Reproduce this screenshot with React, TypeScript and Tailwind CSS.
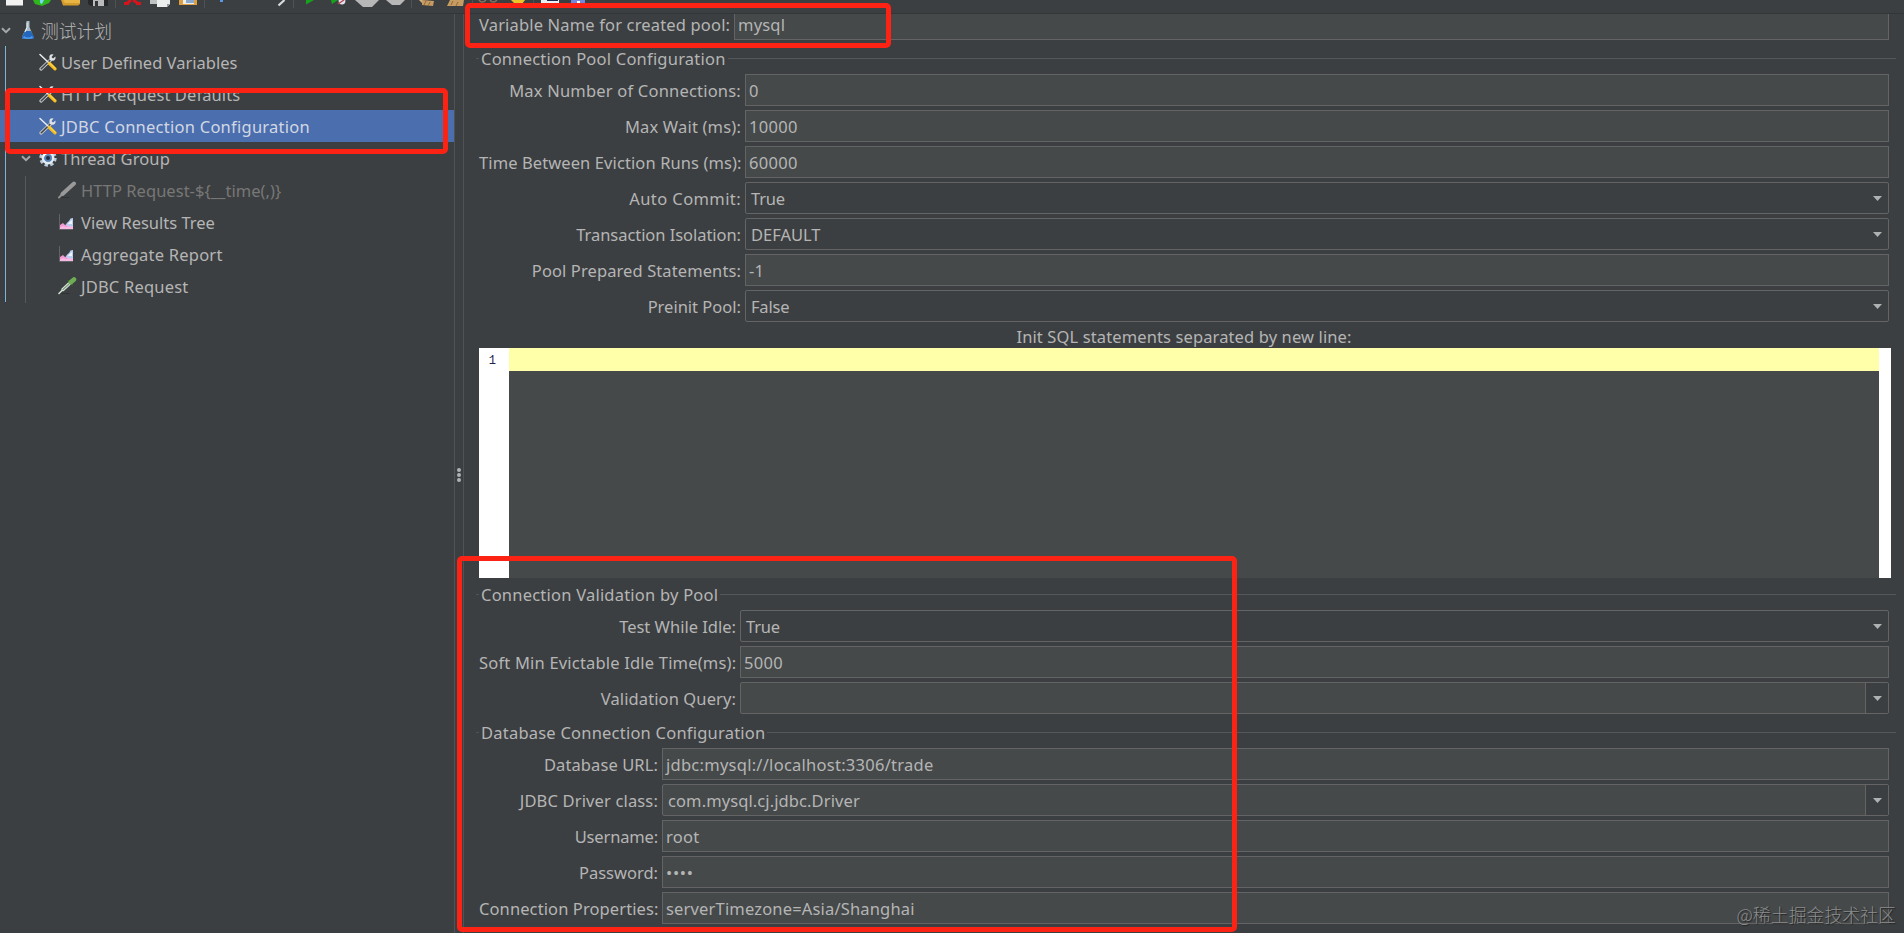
import React from 'react';

interface FieldProps {
  label: string;
  value: string;
  kind?: 'text' | 'select' | 'editable';
  labelClass?: string;
  valueClass?: string;
}

interface TreeRowProps {
  label: string;
  icon: React.ReactNode;
  depth: 0 | 1 | 2;
  open?: boolean;
  selected?: boolean;
  disabled?: boolean;
  labelClass?: string;
}

const FlaskIcon = () => (
  <svg width="14" height="20" viewBox="0 0 14 20">
    <path d="M5.500 1h3v6l4 10q.5 2-1.500 2H2.500Q.5 19 1 17L5.500 7z" fill="#a9bccb" />
    <path d="M4 11h6l3 6q.3 2-1.500 2H2.500Q.7 19 1 17z" fill="#2467bd" />
    <path d="M3 16q4 3 8 0l1 2q-5 2-10 0z" fill="#4e9df0" />
    <path d="M6 2.500v5L4 12" stroke="#f2f6f8" strokeWidth="1" fill="none" />
  </svg>
);

const ToolsIcon = () => (
  <svg width="18" height="18" viewBox="0 0 18 18" fill="none">
    <path d="M2 16 11.500 7" stroke="#c4c7c9" strokeWidth="3.200" strokeLinecap="round" />
    <path d="M2.300 15.700 11 7.200" stroke="#44474a" strokeWidth="1.600" strokeLinecap="round" />
    <path d="M16.500 3.500 14 5.500 12.500 4 14.500 1.500Q10.500.6 10.300 4.300L11 7l2.500.8q3.500-.4 3-4.300z" fill="#dfe3e6" />
    <path d="M1 1.500 9.500 9.500" stroke="#e9edf0" strokeWidth="1.500" strokeLinecap="round" />
    <path d="M10.500 10.500 16 15.800" stroke="#f3bd22" strokeWidth="3.200" strokeLinecap="round" />
    <path d="M10.500 10 16.500 15.500" stroke="#ffdc57" strokeWidth="1" />
  </svg>
);

const GearIcon = () => (
  <svg width="18" height="18" viewBox="0 0 18 18">
    <circle cx="9" cy="9" r="7.200" fill="none" stroke="#bccbdc" strokeWidth="3" strokeDasharray="3.300 2.350" />
    <circle cx="9" cy="9" r="5.200" fill="#5482b4" stroke="#e3ebf3" strokeWidth="2.400" />
    <circle cx="9" cy="9" r="2" fill="#242f3c" />
    <path d="M4.500 7.500q1.500-3.500 5-3.500" stroke="#fff" strokeWidth="1.400" fill="none" />
  </svg>
);

const PipetteIcon = () => (
  <svg width="19" height="18" viewBox="0 0 19 18" fill="none" strokeLinecap="round">
    <path d="M2 16.500h9" stroke="#303335" strokeWidth="1" />
    <path d="M1 16.500 5 12.500" stroke="#d4e0d4" strokeWidth="1.600" />
    <path d="M5 12.500 12 6" stroke="#dce7dc" strokeWidth="3.200" />
    <path d="M5 12.500 11 7" stroke="#7c9a78" strokeWidth="1.200" />
    <path d="M10.500 4 14 7.500" stroke="#35662c" strokeWidth="2" />
    <path d="M13 5 16 2.500" stroke="#6fad55" strokeWidth="4.600" />
  </svg>
);

const MutedPipetteIcon = () => (
  <svg width="19" height="18" viewBox="0 0 19 18" fill="none" strokeLinecap="round">
    <path d="M2 16.500h9" stroke="#303335" strokeWidth="1" />
    <path d="M1 16.500 5 12.500" stroke="#8f8f8f" strokeWidth="2" />
    <path d="M4.500 13 16 2.500" stroke="#999999" strokeWidth="4" />
  </svg>
);

const ChartIcon = () => (
  <svg width="16" height="18" viewBox="0 0 16 18">
    <path d="M1.500 1v15.500H15" stroke="#626466" strokeWidth="1" fill="none" />
    <path d="M2 16v-4l3-2 2 2 4-2 4-3v9z" fill="#f19ad5" />
    <path d="M2 14.500 5 13l3 1 7-2v4H2z" fill="#f9b9e4" />
    <path d="M8 12q0-2 3-4l1.500-2.500L15 5v8q-4 1.500-7-1z" fill="#b9cdf3" />
    <path d="M10 11q1-2 4-4v4z" fill="#edf3ff" />
  </svg>
);

const Chevron = () => (
  <svg width="10" height="7" viewBox="0 0 10 7">
    <path d="M1 1.200 5 5.200 9 1.200" stroke="#a5a7a9" strokeWidth="2" fill="none" />
  </svg>
);

const Arrow = () => (
  <svg width="9" height="5" viewBox="0 0 9 5">
    <path d="M0 0h9L4.500 5z" fill="#afb1b3" />
  </svg>
);

const toolbar: React.ReactNode[][] = [
  [
    <path d="M6 0h17v5.500H6z" fill="#f1f1f1" />,
    <g><path d="M5 0h18l-2 3-7 3-7-2z" fill="#2fb51d" /><path d="M12 0h4l-2 4-2-1z" fill="#78d7f3" /></g>,
    <g><path d="M4 0h19v4l-2 1.500H6z" fill="#d39a2c" /><path d="M6 0h17v3H8z" fill="#e8b544" /></g>,
    <g><path d="M3 0h20v6H6L3 4z" fill="#26282a" /><path d="M8 0h11v6H8z" fill="#b9bbbd" /><path d="M10 1h3v5h-3z" fill="#323436" /></g>,
  ],
  [
    <g fill="none" stroke="#d5151b" strokeWidth="3"><path d="M13 0 8 4M15 0l6 4" /><path d="M6 3.500h5M18 3.500h5" /></g>,
    <g><path d="M4 0h9v4H4z" fill="#bfc2c3" /><path d="M11 0h13v4l-3 3H11z" fill="#eceded" /><path d="M21 4h3l-3 3z" fill="#999" /></g>,
    <g><path d="M5 0h18v5H5z" fill="#dc9f42" /><path d="M9 0h11v4H9z" fill="#eceef0" /><path d="M12 0h8v3h-8z" fill="#8ba9cd" /></g>,
  ],
  [
    <path d="M13 0h3v2h-3z" fill="#5b98e5" />,
    null,
    <path d="M14.500 5.500 20.500 0" stroke="#d9dadb" strokeWidth="2.200" />,
  ],
  [
    <path d="M10 0h8l-8 4.500z" fill="#16a31c" />,
    <g><path d="M7 0h7L8 4z" fill="#16a31c" /><circle cx="18" cy="1" r="3.400" fill="#e3e3ea" /><path d="m14 4 6-4" stroke="#b64457" strokeWidth="1.300" /></g>,
    <path d="M2 0h24l-7 7h-9z" fill="#b7b7b7" />,
    <path d="M5 0h19l-5 5h-8z" fill="#b7b7b7" />,
  ],
  [
    <g><path d="m9 0 12 1-1 5-11-1z" fill="#c79c62" /><path d="M6 0h3v3" fill="#d6b27b" /><path d="m11 5 2-4m2 5 2-4" stroke="#8e6638" /></g>,
    <g><path d="M8 0h14l-1 6H5z" fill="#c79c62" /><path d="m9 5 2-4m3 5 2-4" stroke="#8e6638" /></g>,
  ],
  [
    <g fill="none" stroke="#857261" strokeWidth="1.500"><path d="M5 0q3 4 7 0M16 0q3 4 7 0" /></g>,
    <path d="M8 0h14l-3 4h-7z" fill="#eec42b" />,
  ],
  [
    <g><path d="M6 0h18v3H6z" fill="#eceef2" /><path d="M12 0h11v1H12z" fill="#1c2752" /></g>,
    <g><path d="M8 0h14v3H8z" fill="#7486de" /><path d="M14 1h3v2h-3z" fill="#fff" /></g>,
  ],
];

const Toolbar = () => (
  <div className="flex h-[14px] shrink-0 overflow-hidden border-b border-[#333537]">
    {toolbar.map((group, i) => (
      <div key={i} className="flex">
        {i > 0 && <div className="mx-[1.500px] h-2 w-px bg-[#505355]" />}
        {group.map((icon, j) => (
          <svg key={j} className="w-[28.400px]" height="14" viewBox="0 0 28.400 14">{icon}</svg>
        ))}
      </div>
    ))}
  </div>
);

const indents = ['pl-[1px]', 'pl-[21px]', 'pl-[41px]'];

const TreeRow: React.FC<TreeRowProps> = ({ label, icon, depth, open, selected, disabled, labelClass = '' }) => (
  <div className={`flex h-8 items-center ${indents[depth]} ${selected ? 'bg-[#4b6eaf] text-[#d2d8e2]' : ''} ${disabled ? 'text-[#777777]' : ''}`}>
    <div className="w-[17px] shrink-0">{open && <Chevron />}</div>
    <div className={`flex w-[23px] shrink-0 justify-start ${depth === 2 ? '' : 'pl-px'}`}>{icon}</div>
    <span className={`pt-[2px] ${labelClass}`}>{label}</span>
  </div>
);

const Field: React.FC<FieldProps> = ({ label, value, kind = 'text', labelClass = '', valueClass = '' }) => (
  <>
    <label className={`pt-[2px] pr-1 text-right ${labelClass}`}>{label}</label>
    <div
      className={`flex h-8 items-center border border-[#646464] ${kind === 'text' ? 'bg-[#45494a] pl-[3px]' : 'rounded-[2px] pl-[5px]'} ${kind === 'editable' ? 'bg-[#45494a]' : ''}`}
    >
      <span className={`flex-1 pt-[2px] ${valueClass}`}>{value}</span>
      {kind !== 'text' && (
        <div className={`flex h-full items-center justify-center ${kind === 'editable' ? 'w-[23px] border-l border-[#646464] bg-[#3c3f41]' : 'w-[22px]'}`}>
          <Arrow />
        </div>
      )}
    </div>
  </>
);

const Legend = ({ children }: { children: React.ReactNode }) => (
  <div className="-mr-[7px] -ml-[3px] flex h-6 items-center gap-[2px]">
    <div className="mb-[2px] h-px w-[3px] bg-[#505355]" />
    <span className="tracking-[0.220px]">{children}</span>
    <div className="mb-[2px] h-px flex-1 bg-[#555859]" />
  </div>
);

export default function App() {
  return (
    <div className="relative flex h-[933px] w-[1904px] flex-col overflow-hidden bg-[#3c3f41] font-['Noto_Sans','Noto_Sans_CJK_SC',sans-serif] text-[16.500px] leading-6 tracking-[0.100px] whitespace-nowrap text-[#b5b5b5]">
      <Toolbar />
      <div className="flex min-h-0 flex-1">
        <aside className="relative w-[454px] shrink-0">
          <div className="flex h-8 items-center pl-px">
            <div className="w-5"><Chevron /></div>
            <div className="w-5"><FlaskIcon /></div>
            <span className="font-['Noto_Sans_CJK_SC',sans-serif] text-[17.800px] font-light tracking-normal">测试计划</span>
          </div>
          <TreeRow depth={1} icon={<ToolsIcon />} label="User Defined Variables" labelClass="tracking-normal" />
          <TreeRow depth={1} icon={<ToolsIcon />} label="HTTP Request Defaults" />
          <TreeRow depth={1} icon={<ToolsIcon />} label="JDBC Connection Configuration" labelClass="tracking-[0.250px]" selected />
          <TreeRow depth={1} icon={<GearIcon />} label="Thread Group" open />
          <TreeRow depth={2} icon={<MutedPipetteIcon />} label="HTTP Request-${__time(,)}" labelClass="tracking-[0.030px]" disabled />
          <TreeRow depth={2} icon={<ChartIcon />} label="View Results Tree" labelClass="tracking-normal" />
          <TreeRow depth={2} icon={<ChartIcon />} label="Aggregate Report" labelClass="tracking-[0.220px]" />
          <TreeRow depth={2} icon={<PipetteIcon />} label="JDBC Request" labelClass="tracking-[0.200px]" />
          <div className="absolute top-8 left-[5px] h-64 w-px bg-[#7db4dc]" />
          <div className="absolute top-[162px] left-[25px] h-[127px] w-px bg-[#56595b]" />
        </aside>

        <div className="flex w-[10px] shrink-0 flex-col items-center justify-center gap-px border-x border-[#505355] pt-[3px]">
          <i className="h-[4px] w-[4px] rounded-full bg-[#afb1b3]" />
          <i className="h-[4px] w-[4px] rounded-full bg-[#afb1b3]" />
          <i className="h-[4px] w-[4px] rounded-full bg-[#afb1b3]" />
        </div>

        <main className="flex-1 pr-[15px] pl-[15px]">
          <div className="grid h-[26px] grid-cols-[255px_1fr]">
            <label className="-mt-px pr-1 text-right tracking-[0.160px]">Variable Name for created pool:</label>
            <div className="border border-t-0 border-[#646464] bg-[#45494a] pl-[3px]">
              <span className="relative -top-px tracking-[0.200px]">mysql</span>
            </div>
          </div>

          <div className="mt-[7px]">
            <Legend>Connection Pool Configuration</Legend>
          </div>
          <div className="mt-[3px] grid grid-cols-[266px_1fr] items-center gap-y-1">
            <Field label="Max Number of Connections:" value="0" labelClass="tracking-[0.200px]" />
            <Field label="Max Wait (ms):" value="10000" labelClass="tracking-[0.170px]" valueClass="tracking-[0.300px]" />
            <Field label="Time Between Eviction Runs (ms):" value="60000" valueClass="tracking-[0.300px]" />
            <Field label="Auto Commit:" value="True" labelClass="tracking-[0.400px]" valueClass="tracking-[-0.200px]" kind="select" />
            <Field label="Transaction Isolation:" value="DEFAULT" labelClass="tracking-[-0.050px]" valueClass="tracking-normal" kind="select" />
            <Field label="Pool Prepared Statements:" value="-1" />
            <Field label="Preinit Pool:" value="False" labelClass="tracking-normal" valueClass="tracking-[-0.200px]" kind="select" />
          </div>

          <div className="mt-[3px] h-[23px] text-center tracking-[0.120px]">Init SQL statements separated by new line:</div>
          <div className="-mr-[2px] flex h-[230px] bg-[#45494a]">
            <div className="w-[30px] bg-white pt-px pr-[13px] text-right font-['Liberation_Mono',monospace] text-[12px] leading-6 tracking-normal text-[#22224a]">1</div>
            <div className="h-[23px] flex-1 bg-[#ffffaa]" />
            <div className="w-3 bg-white" />
          </div>

          <div className="mt-[5px]">
            <Legend>Connection Validation by Pool</Legend>
          </div>
          <div className="mt-[3px] grid grid-cols-[261px_1fr] items-center gap-y-1">
            <Field label="Test While Idle:" value="True" labelClass="tracking-normal" valueClass="tracking-[-0.200px]" kind="select" />
            <Field label="Soft Min Evictable Idle Time(ms):" value="5000" labelClass="tracking-[0.190px]" valueClass="tracking-[0.300px]" />
            <Field label="Validation Query:" value="" kind="editable" />
          </div>

          <div className="mt-[7px]">
            <Legend>Database Connection Configuration</Legend>
          </div>
          <div className="mt-[3px] grid grid-cols-[183px_1fr] items-center gap-y-1">
            <Field label="Database URL:" value="jdbc:mysql://localhost:3306/trade" valueClass="tracking-[0.260px]" />
            <Field label="JDBC Driver class:" value="com.mysql.cj.jdbc.Driver" labelClass="tracking-[0.150px]" kind="editable" />
            <Field label="Username:" value="root" labelClass="tracking-[-0.150px]" valueClass="tracking-[0.300px]" />
            <Field label="Password:" value="••••" labelClass="tracking-normal" valueClass="tracking-[0.700px]" />
            <Field label="Connection Properties:" value="serverTimezone=Asia/Shanghai" valueClass="tracking-[0.170px]" />
          </div>
        </main>
      </div>

      {/* annotations */}
      <div className="absolute top-[3px] left-[465px] h-[45px] w-[426px] rounded-[5px] border-[5px] border-[#fd2314]" />
      <div className="absolute top-[88px] left-[5px] h-[66px] w-[443px] rounded-[5px] border-[5px] border-[#fd2314]" />
      <div className="absolute top-[556px] left-[457px] h-[376px] w-[780px] rounded-[5px] border-[5px] border-[#fd2314]" />
      <div className="absolute right-[8px] bottom-[7px] font-['Noto_Sans_CJK_SC',sans-serif] text-[17.900px] font-light tracking-normal text-[#8b8d8e] [text-shadow:1px_1px_1px_#222]">
        @稀土掘金技术社区
      </div>
    </div>
  );
}
